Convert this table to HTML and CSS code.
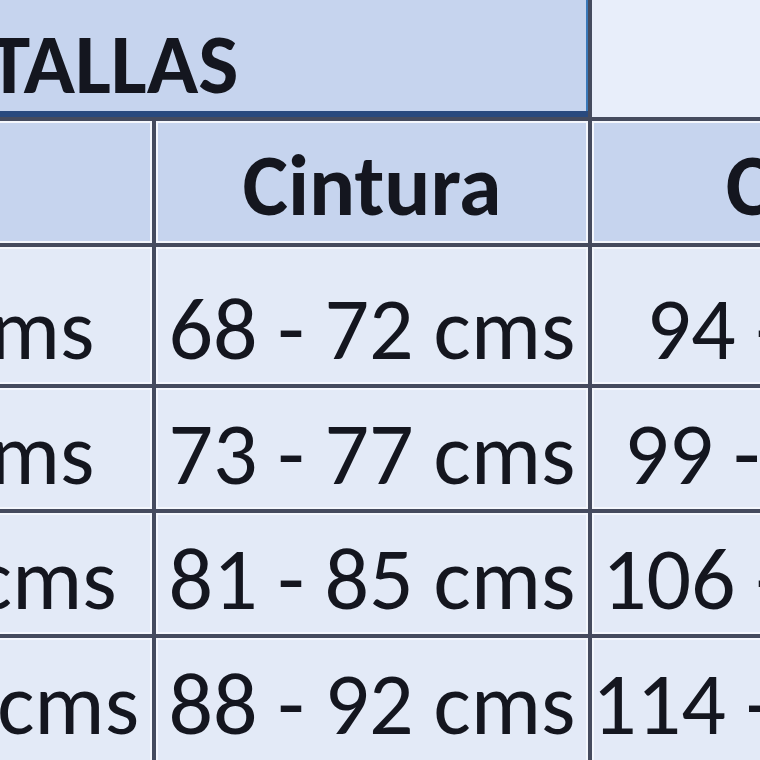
FILE: index.html
```html
<!DOCTYPE html>
<html lang="es">
<head>
<meta charset="utf-8">
<title>Tabla de tallas</title>
<link rel="stylesheet" href="styles.css">
</head>
<body>
<div class="sheet">
  <div class="cell title">TABLA DE TALLAS</div>
  <div class="cell title-rest"></div>

  <div class="cell head">Talla</div>
  <div class="cell head">Pecho</div>
  <div class="cell head">Cintura</div>
  <div class="cell head">Cadera</div>

  <div class="cell data">S</div>
  <div class="cell data">86 - 90 cms</div>
  <div class="cell data">68 - 72 cms</div>
  <div class="cell data">94 - 98 cms</div>

  <div class="cell data">M</div>
  <div class="cell data">91 - 95 cms</div>
  <div class="cell data">73 - 77 cms</div>
  <div class="cell data">99 - 103 cms</div>

  <div class="cell data">L</div>
  <div class="cell data">96 - 100 cms</div>
  <div class="cell data">81 - 85 cms</div>
  <div class="cell data">106 - 110 cms</div>

  <div class="cell data last">XL</div>
  <div class="cell data last">102 - 106 cms</div>
  <div class="cell data last">88 - 92 cms</div>
  <div class="cell data last">114 -&nbsp; 118 cms</div>
</div>
</body>
</html>
```

FILE: styles.css
```css
html, body {
  margin: 0;
  padding: 0;
  width: 760px;
  height: 760px;
  overflow: hidden;
  background: #e8eefa;
}

.sheet {
  display: grid;
  grid-template-columns: 343px 522px 432px 516px;
  grid-template-rows: 160px 122px 137px 121px 121px 160px;
  gap: 4px;
  background: #454b5e;
  margin-left: -717px;
  margin-top: -43px;
  width: max-content;
  font-family: Carlito, "Open Sans", sans-serif;
  font-size: 88px;
  line-height: 1;
  color: #14161f;
}

.cell {
  display: flex;
  align-items: flex-end;
  justify-content: center;
  white-space: nowrap;
  overflow: hidden;
  box-shadow: inset 0 0 0 2px #f4f7fd;
}

.title {
  grid-column: 1 / 4;
  background: #c6d4ee;
  font-weight: bold;
  font-size: 85px;
  padding-bottom: 10px;
  box-shadow: inset 0 -6px 0 #2a4a7e, inset -2px 0 0 #3a78b8;
}

.title-rest {
  background: #e8eefa;
  box-shadow: none;
}

.head {
  background: #c6d4ee;
  font-weight: bold;
  font-size: 86px;
  padding-bottom: 14px;
}

.data {
  background: #e3eaf7;
  padding-bottom: 11px;
}

.data.last {
  padding-bottom: 50px;
}
```
